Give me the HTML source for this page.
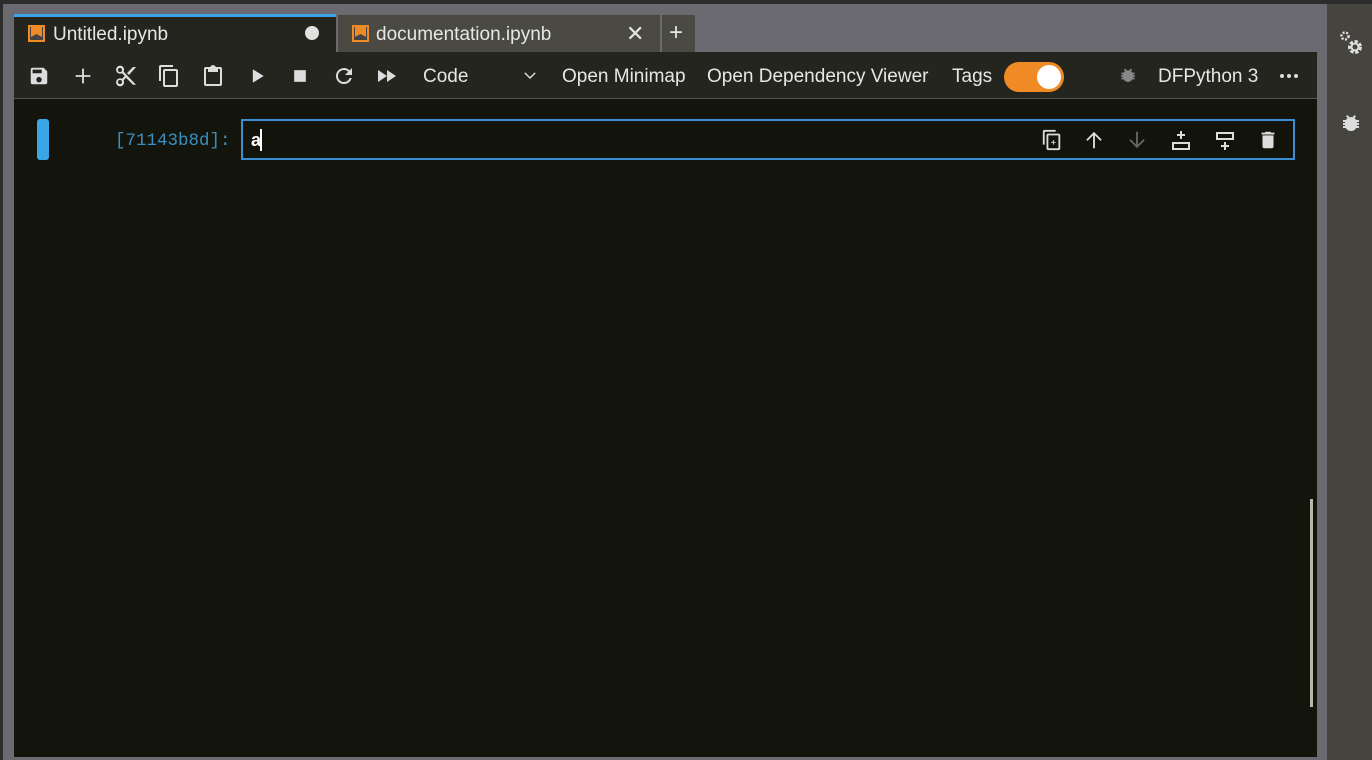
<!DOCTYPE html>
<html><head><meta charset="utf-8"><style>
*{box-sizing:border-box;margin:0;padding:0}
body{width:1372px;height:760px;background:#6a6a70;position:relative;overflow:hidden;font-family:"Liberation Sans",sans-serif;color:#e6e6e6}
.abs{position:absolute}
svg{position:absolute;fill:#ddd}
.t{font-size:19px;position:absolute;white-space:nowrap}
</style></head><body>
<div class="abs" style="left:0;top:0;width:1372px;height:4px;background:#2c2c2c"></div>
<div class="abs" style="left:0;top:0;width:3px;height:760px;background:#2c2c2c"></div>
<div class="abs" style="left:1327px;top:4px;width:45px;height:756px;background:#45443f"></div>
<!-- main -->
<div class="abs" style="left:14px;top:99px;width:1303px;height:658px;background:#13150c"></div>
<div class="abs" style="left:14px;top:52px;width:1303px;height:47px;background:#25251f;border-bottom:1px solid #55554f"></div>
<!-- tabs -->
<div class="abs" style="left:14px;top:14px;width:322px;height:38px;background:#25251f;border-top:3px solid #3aa6e8"></div>
<div class="abs" style="left:338px;top:15px;width:322px;height:37px;background:#4a4a42"></div>
<div class="abs" style="left:662px;top:15px;width:33px;height:37px;background:#4a4a42"></div>
<div class="abs" style="left:28px;top:25px;width:17px;height:17px;border:2px solid #f08a24;background:#444"><div style="position:absolute;left:1px;top:0;width:11px;height:10px;background:#f08a24;clip-path:polygon(0 0,100% 0,100% 100%,50% 70%,0 100%)"></div></div>
<div class="abs" style="left:352px;top:25px;width:17px;height:17px;border:2px solid #f08a24;background:#444"><div style="position:absolute;left:1px;top:0;width:11px;height:10px;background:#f08a24;clip-path:polygon(0 0,100% 0,100% 100%,50% 70%,0 100%)"></div></div>
<div class="t" style="left:53px;top:24px">Untitled.ipynb</div>
<div class="abs" style="left:305px;top:26px;width:14px;height:14px;border-radius:50%;background:#e0e0e0"></div>
<div class="t" style="left:376px;top:24px">documentation.ipynb</div>
<div class="t" style="left:626px;top:21px;font-size:22px">✕</div>
<div class="t" style="left:669px;top:19px;font-size:24px">+</div>
<!-- toolbar icons -->
<svg style="left:28px;top:65px" width="22" height="22" viewBox="0 0 24 24"><path d="M17 3H5a2 2 0 0 0-2 2v14a2 2 0 0 0 2 2h14a2 2 0 0 0 2-2V7zm-5 16a3 3 0 1 1 0-6 3 3 0 0 1 0 6zm3-10H5V5h10z"/></svg>
<svg style="left:72px;top:65px" width="22" height="22" viewBox="0 0 24 24"><path d="M11 4h2v7h7v2h-7v7h-2v-7H4v-2h7z"/></svg>
<svg style="left:114px;top:64px" width="24" height="24" viewBox="0 0 24 24"><path d="M9.6 7.6A4 4 0 1 0 8 9.2L10.8 12 8 14.8a4 4 0 1 0 1.6 1.6L12 13.8l7 7H22zM6 8a2 2 0 1 1 0-4 2 2 0 0 1 0 4zm0 12a2 2 0 1 1 0-4 2 2 0 0 1 0 4zM19 3l-6 6 2 2 7-8z"/></svg>
<svg style="left:157px;top:64px" width="24" height="24" viewBox="0 0 24 24"><path d="M16 1H4a2 2 0 0 0-2 2v14h2V3h12zm3 4H8a2 2 0 0 0-2 2v14a2 2 0 0 0 2 2h11a2 2 0 0 0 2-2V7a2 2 0 0 0-2-2zm0 16H8V7h11z"/></svg>
<svg style="left:201px;top:64px" width="24" height="24" viewBox="0 0 24 24"><path d="M19 3h-4.2a3 3 0 0 0-5.6 0H5a2 2 0 0 0-2 2v15a2 2 0 0 0 2 2h14a2 2 0 0 0 2-2V5a2 2 0 0 0-2-2zm0 17H5V5h2v3h10V5h2z"/></svg>
<svg style="left:247px;top:66px" width="20" height="20" viewBox="0 0 24 24"><path d="M7 4l13 8-13 8z"/></svg>
<svg style="left:290px;top:66px" width="20" height="20" viewBox="0 0 24 24"><path d="M5 5h14v14H5z"/></svg>
<svg style="left:332px;top:64px" width="24" height="24" viewBox="0 0 24 24"><path d="M17.6 6.4A8 8 0 1 0 19.7 14h-2.1a6 6 0 1 1-1.4-6.2L13 11h7V4z"/></svg>
<svg style="left:375px;top:64px" width="24" height="24" viewBox="0 0 24 24"><path d="M3 6l9 6-9 6zm9 0l9 6-9 6z"/></svg>
<div class="t" style="left:423px;top:66px">Code</div>
<svg style="left:522px;top:67px" width="16" height="16" viewBox="0 0 24 24"><path d="M5 8l7 7 7-7 1.5 1.5L12 18 3.5 9.5z"/></svg>
<div class="t" style="left:562px;top:66px">Open Minimap</div>
<div class="t" style="left:707px;top:66px">Open Dependency Viewer</div>
<div class="t" style="left:952px;top:66px">Tags</div>
<div class="abs" style="left:1004px;top:62px;width:60px;height:30px;border-radius:15px;background:#f08a24"></div>
<div class="abs" style="left:1037px;top:65px;width:24px;height:24px;border-radius:50%;background:#fff"></div>
<svg style="left:1118px;top:65px;fill:#888" width="20" height="22" viewBox="0 0 24 24"><path d="M20 8h-2.8a6 6 0 0 0-1.8-2l1.6-1.6L15.6 3l-2.2 2.2a6 6 0 0 0-2.8 0L8.4 3 7 4.4 8.6 6a6 6 0 0 0-1.8 2H4v2h2.1v1H4v2h2.1v1H4v2h2.8a6 6 0 0 0 10.4 0H20v-2h-2.1v-1H20v-2h-2.1v-1H20z"/></svg>
<div class="t" style="left:1158px;top:66px">DFPython 3</div>
<div class="abs" style="left:1280px;top:74px;width:4px;height:4px;background:#ddd;border-radius:50%"></div>
<div class="abs" style="left:1287px;top:74px;width:4px;height:4px;background:#ddd;border-radius:50%"></div>
<div class="abs" style="left:1294px;top:74px;width:4px;height:4px;background:#ddd;border-radius:50%"></div>
<!-- sidebar icons -->
<svg style="left:1338px;top:30px;fill:#ddd" width="28" height="28" viewBox="0 0 28 28"><circle cx="7" cy="6" r="3.5" fill="none" stroke="#ddd" stroke-width="2.5" stroke-dasharray="2 1.5"/><circle cx="17" cy="17" r="5" fill="none" stroke="#ddd" stroke-width="4" stroke-dasharray="3 1.6"/><circle cx="17" cy="17" r="3.5" fill="none" stroke="#ddd" stroke-width="2"/></svg>
<svg style="left:1339px;top:111px;fill:#ddd" width="24" height="26" viewBox="0 0 24 24"><path d="M20 8h-2.8a6 6 0 0 0-1.8-2l1.6-1.6L15.6 3l-2.2 2.2a6 6 0 0 0-2.8 0L8.4 3 7 4.4 8.6 6a6 6 0 0 0-1.8 2H4v2h2.1v1H4v2h2.1v1H4v2h2.8a6 6 0 0 0 10.4 0H20v-2h-2.1v-1H20v-2h-2.1v-1H20z"/></svg>
<!-- cell -->
<div class="abs" style="left:37px;top:119px;width:12px;height:41px;border-radius:3px;background:#3aa6e8"></div>
<div class="abs" style="left:115px;top:131px;font-family:'Liberation Mono',monospace;font-size:17.5px;color:#3a8fc0">[71143b8d]:</div>
<div class="abs" style="left:241px;top:119px;width:1054px;height:41px;border:2px solid #3a8fd0;background:#12140c"></div>
<div class="abs" style="left:251px;top:130px;font-size:18px;color:#fff;font-weight:bold">a</div>
<div class="abs" style="left:260px;top:129px;width:2px;height:22px;background:#fff"></div>
<svg style="left:1041px;top:129px" width="22" height="22" viewBox="0 0 24 24"><path d="M16 1H4a2 2 0 0 0-2 2v14h2V3h12zm3 4H8a2 2 0 0 0-2 2v14a2 2 0 0 0 2 2h11a2 2 0 0 0 2-2V7a2 2 0 0 0-2-2zm0 16H8V7h11zm-6-9h1v2h2v1h-2v2h-1v-2h-2v-1h2z"/></svg>
<svg style="left:1083px;top:129px" width="22" height="22" viewBox="0 0 24 24"><path d="M11 21V7l-6 6-1.4-1.4L12 3.2l8.4 8.4L19 13l-6-6v14z"/></svg>
<svg style="left:1126px;top:129px;fill:#666" width="22" height="22" viewBox="0 0 24 24"><path d="M11 3v14l-6-6-1.4 1.4 8.4 8.4 8.4-8.4L19 11l-6 6V3z"/></svg>
<svg style="left:1169px;top:129px" width="24" height="24" viewBox="0 0 24 24"><path d="M11 2h2v3h3v2h-3v3h-2V7H8V5h3zM3 13h18v8H3zm2 2v4h14v-4z"/></svg>
<svg style="left:1213px;top:129px" width="24" height="24" viewBox="0 0 24 24"><path d="M3 3h18v8H3zm2 2v4h14V5zm6 8h2v3h3v2h-3v3h-2v-3H8v-2h3z"/></svg>
<svg style="left:1257px;top:129px" width="22" height="22" viewBox="0 0 24 24"><path d="M6 19a2 2 0 0 0 2 2h8a2 2 0 0 0 2-2V7H6zM19 4h-3.5l-1-1h-5l-1 1H5v2h14z"/></svg>
<!-- scrollbar -->
<div class="abs" style="left:1310px;top:499px;width:3px;height:208px;background:#b8b8a8"></div>
</body></html>
